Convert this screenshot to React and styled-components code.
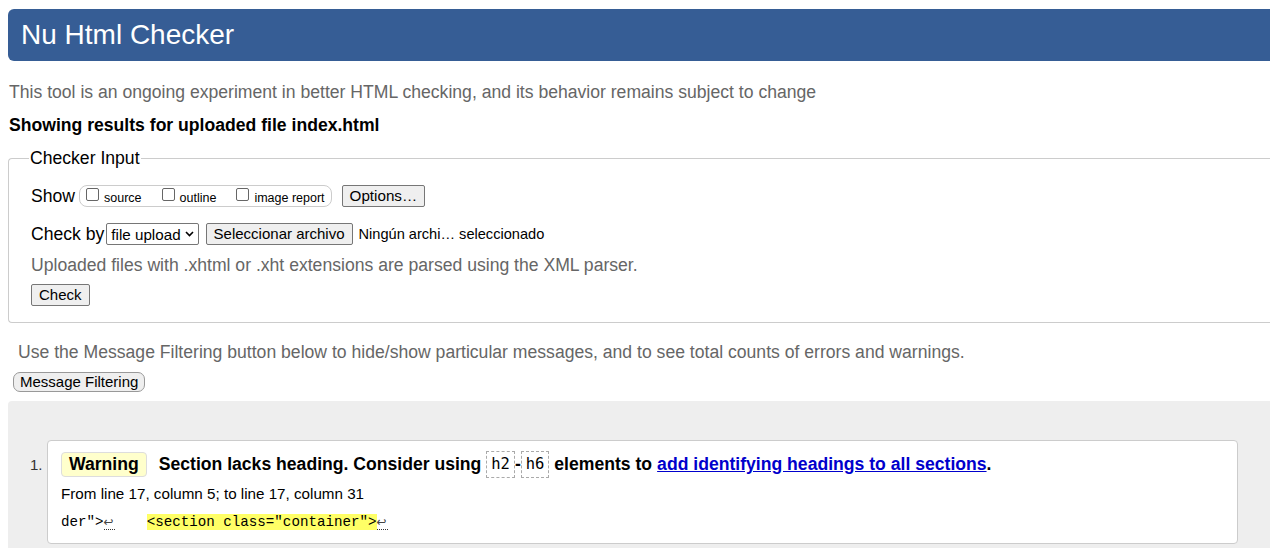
import React from 'react';
import styled, { createGlobalStyle } from 'styled-components';

const GlobalStyle = createGlobalStyle`
  html, body {
    margin: 0;
    padding: 0;
    background: #fff;
    overflow: hidden;
  }
  body {
    font-family: "Liberation Sans", Arial, sans-serif;
    color: #000;
  }
`;

const Page = styled.div`
  width: 1292px;
  padding: 9px 0 0 8px;
`;

const Header = styled.h1`
  margin: 0;
  height: 52px;
  background: #365d95;
  color: #fff;
  font-weight: normal;
  font-size: 28px;
  line-height: 52px;
  padding-left: 13px;
  border-radius: 6px 0 0 6px;
`;

const Intro = styled.p`
  margin: 20px 0 0 1px;
  color: #666;
  font-size: 17.6px;
  line-height: 22px;
`;

const Results = styled.p`
  margin: 11px 0 0 1px;
  font-size: 17.6px;
  line-height: 22px;
  font-weight: bold;
`;

const Fieldset = styled.fieldset`
  margin: 12px 0 0 0;
  padding: 16px 22px 16px 22px;
  border: 1px solid #ccc;
  border-right: none;
  border-radius: 4px 0 0 4px;
`;

const Legend = styled.legend`
  font-size: 17.6px;
  padding: 0 1px;
  margin-left: -2px;
`;

const Row = styled.div`
  display: flex;
  align-items: center;
  height: 22px;
  margin-top: ${(p) => p.$top || 0}px;
  font-size: 17.6px;
`;

const Label = styled.span`
  margin-right: ${(p) => p.$gap || 0}px;
`;

const Group = styled.span`
  display: inline-flex;
  align-items: center;
  height: 20px;
  border: 1px solid #ccc;
  border-radius: 8px;
  padding: 0 6px 0 6px;
  gap: 20px;
`;

const Choice = styled.label`
  display: inline-flex;
  align-items: center;
  font-size: 12.5px;
  gap: 5px;
  padding-top: 3px;
`;

const Box = styled.span`
  display: inline-block;
  width: 11px;
  height: 11px;
  border: 1px solid #666;
  border-radius: 2px;
  margin-top: -6px;
  background: #fff;
`;

const Button = styled.button`
  font-family: "Liberation Sans", Arial, sans-serif;
  font-size: ${(p) => p.$size || 15}px;
  height: 22px;
  padding: 0 7px;
  background: #efefef;
  border: 1px solid #767676;
  border-radius: 2px;
  color: #000;
  margin-left: ${(p) => p.$left || 0}px;
  line-height: 18px;
`;

const Select = styled.span`
  display: inline-flex;
  align-items: center;
  height: 20px;
  border: 1px solid #767676;
  border-radius: 2px;
  padding: 0 4px 0 4px;
  font-size: 15.2px;
  gap: 4px;
  margin-left: 2px;
`;

const FileName = styled.span`
  font-size: 14.6px;
  margin-left: 6px;
`;

const Hint = styled.p`
  margin: 9px 0 0 0;
  color: #666;
  font-size: 17.6px;
  line-height: 22px;
`;

const CheckButton = styled(Button)`
  margin-top: 8px;
`;

const FilterText = styled.p`
  margin: 18px 0 0 10px;
  color: #666;
  font-size: 17.6px;
  line-height: 22px;
`;

const FilterButton = styled(Button)`
  margin: 9px 0 0 5px;
  height: 20px;
  border-color: #999;
  border-radius: 7px;
  padding: 0 6px;
  display: block;
`;

const Messages = styled.div`
  margin-top: 9px;
  background: #eee;
  padding: 39px 62px 20px 22px;
  border-radius: 4px 0 0 0;
`;

const Item = styled.div`
  display: grid;
  grid-template-columns: 17px 1fr;
`;

const Number = styled.span`
  font-size: 15px;
  padding-top: 16px;
  color: #333;
`;

const Card = styled.div`
  background: #fff;
  border: 1px solid #ccc;
  border-radius: 4px;
  padding: 10px 13px 12px 13px;
`;

const Title = styled.div`
  display: flex;
  align-items: center;
  font-size: 17.6px;
  font-weight: bold;
  height: 27px;
`;

const Badge = styled.span`
  background: #ffffcc;
  border: 1px solid #ddd;
  border-radius: 4px;
  padding: 0 7px;
  height: 23px;
  line-height: 23px;
  margin-right: 12px;
`;

const Code = styled.code`
  font-family: "DejaVu Sans Mono", "Liberation Mono", monospace;
  font-weight: normal;
  font-size: 15.5px;
  border: 1px dashed #aaa;
  padding: 0 4px;
  height: 25px;
  line-height: 25px;
`;

const Link = styled.a`
  color: #0000cc;
  text-decoration: underline;
  margin-left: 5px;
`;

const Location = styled.p`
  margin: 7px 0 0 0;
  font-size: 15.2px;
  line-height: 18px;
`;

const Extract = styled.pre`
  margin: 10px 0 0 0;
  font-family: "Liberation Mono", monospace;
  font-size: 14.2px;
  line-height: 18px;
`;

const Return = styled.span`
  color: #444;
  border-bottom: 1px dotted #333;
  font-family: "DejaVu Sans", sans-serif;
  font-size: 12px;
  padding-right: 1px;
`;

const Highlight = styled.mark`
  background: #ffff66;
  color: #000;
  margin-left: 32px;
`;

export default function App() {
  return (
    <>
      <GlobalStyle />
      <Page>
        <Header>Nu Html Checker</Header>
        <Intro>
          This tool is an ongoing experiment in better HTML checking, and its behavior remains subject to change
        </Intro>
        <Results>Showing results for uploaded file index.html</Results>
        <Fieldset>
          <Legend>Checker Input</Legend>
          <Row>
            <Label $gap={4}>Show</Label>
            <Group>
              <Choice><Box />source</Choice>
              <Choice><Box />outline</Choice>
              <Choice><Box />image report</Choice>
            </Group>
            <Button $size={15.2} $left={10}>Options…</Button>
          </Row>
          <Row $top={16}>
            <Label>Check by</Label>
            <Select>
              file upload
              <svg width="9" height="6" viewBox="0 0 9 6">
                <path d="M1 1l3.5 3.5L8 1" fill="none" stroke="#000" strokeWidth="1.6" />
              </svg>
            </Select>
            <Button $size={15} $left={7}>Seleccionar archivo</Button>
            <FileName>Ningún archi… seleccionado</FileName>
          </Row>
          <Hint>Uploaded files with .xhtml or .xht extensions are parsed using the XML parser.</Hint>
          <CheckButton $size={15}>Check</CheckButton>
        </Fieldset>
        <FilterText>
          Use the Message Filtering button below to hide/show particular messages, and to see total counts of errors and warnings.
        </FilterText>
        <FilterButton $size={15}>Message Filtering</FilterButton>
        <Messages>
          <Item>
            <Number>1.</Number>
            <Card>
              <Title>
                <Badge>Warning</Badge>
                Section lacks heading. Consider using&nbsp;
                <Code>h2</Code>-<Code>h6</Code>&nbsp;elements to
                <Link>add identifying headings to all sections</Link>.
              </Title>
              <Location>From line 17, column 5; to line 17, column 31</Location>
              <Extract>
                der"&gt;<Return>↩</Return>
                <Highlight>&lt;section class="container"&gt;</Highlight>
                <Return>↩</Return>
              </Extract>
            </Card>
          </Item>
        </Messages>
      </Page>
    </>
  );
}
